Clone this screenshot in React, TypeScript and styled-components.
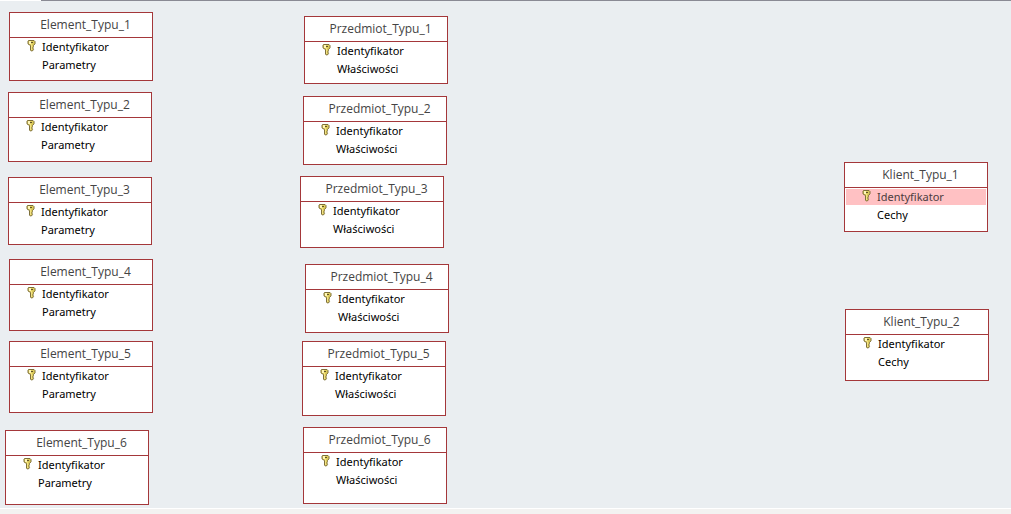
import React from "react";
import styled, { createGlobalStyle } from "styled-components";

const GlobalStyle = createGlobalStyle`
  body {
    margin: 0;
    font-family: "Noto Sans", "Open Sans", sans-serif;
  }
`;

const Page = styled.div`
  display: flex;
  flex-direction: column;
  min-height: 100vh;
  background: #f3f2f1;
`;

const TabEdge = styled.div`
  display: flex;
  height: 1px;
  background: #8a8a94;
`;

const ActiveTab = styled.div`
  width: 41px;
  background: #ffffff;
`;

const Canvas = styled.main`
  position: relative;
  flex: 1;
  background: #eaeef1;
  border-bottom: 1px solid #ffffff;
`;

const StatusStrip = styled.footer`
  height: 5px;
`;

const Entity = styled.section<{ $x: number; $y: number; $height: number }>`
  position: absolute;
  left: ${(p) => p.$x}px;
  top: ${(p) => p.$y}px;
  box-sizing: border-box;
  width: 144px;
  height: ${(p) => p.$height}px;
  border: 1px solid #a4373a;
  background: #ffffff;
`;

const EntityTitle = styled.h2`
  margin: 0;
  padding-left: 9px;
  height: 24px;
  border-bottom: 1px solid #a4373a;
  color: #444444;
  font-family: "Open Sans", "Noto Sans", sans-serif;
  font-size: 12px;
  font-weight: 400;
  line-height: 24px;
  text-align: center;
`;

const FieldList = styled.ul`
  display: flex;
  flex-direction: column;
  gap: 2px;
  margin: 0;
  padding: 1px;
  list-style: none;
`;

const Field = styled.li<{ $selected: boolean }>`
  display: flex;
  height: 16px;
  background: ${(p) => (p.$selected ? "#ffc1c3" : "transparent")};
  color: ${(p) => (p.$selected ? "#4c3c3e" : "#000000")};
  font-size: 11px;
  line-height: 16px;
`;

const KeySlot = styled.span`
  flex: none;
  width: 31px;
  padding: 1px 0 0 16px;
  box-sizing: border-box;
`;

const KeySvg = styled.svg`
  display: block;
`;

function KeyIcon() {
  return (
    <KeySvg width="9" height="12" viewBox="0 0 9 12" role="img" aria-label="Klucz podstawowy">
      <path
        d="M1.5.5h5.500l1 1v2.300L6.500 5.500v1l-.7.7.7.8-.7.9.7.8-1.200 1.300H4.300l-.8-1V5.500L1 3.900V1z"
        fill="#dccb5c"
        stroke="#7d6f3a"
        strokeWidth="1"
      />
      <path d="M2 1h2v3H2z" fill="#fff7b8" />
      <path d="M4 2h2v1H4z" fill="#5f5228" />
      <path d="M4.500 4v6" stroke="#f3e283" strokeWidth="1" />
    </KeySvg>
  );
}

type EntityData = {
  name: string;
  attribute: string;
  x: number;
  y: number;
  height: number;
  selected?: boolean;
};

const entities: EntityData[] = [
  { name: "Element_Typu_1", attribute: "Parametry", x: 9, y: 11, height: 69 },
  { name: "Element_Typu_2", attribute: "Parametry", x: 8, y: 91, height: 70 },
  { name: "Element_Typu_3", attribute: "Parametry", x: 8, y: 176, height: 68 },
  { name: "Element_Typu_4", attribute: "Parametry", x: 9, y: 258, height: 72 },
  { name: "Element_Typu_5", attribute: "Parametry", x: 9, y: 340, height: 72 },
  { name: "Element_Typu_6", attribute: "Parametry", x: 5, y: 429, height: 75 },
  { name: "Przedmiot_Typu_1", attribute: "Właściwości", x: 304, y: 15, height: 68 },
  { name: "Przedmiot_Typu_2", attribute: "Właściwości", x: 303, y: 95, height: 69 },
  { name: "Przedmiot_Typu_3", attribute: "Właściwości", x: 300, y: 175, height: 72 },
  { name: "Przedmiot_Typu_4", attribute: "Właściwości", x: 305, y: 263, height: 69 },
  { name: "Przedmiot_Typu_5", attribute: "Właściwości", x: 302, y: 340, height: 75 },
  { name: "Przedmiot_Typu_6", attribute: "Właściwości", x: 303, y: 426, height: 77 },
  { name: "Klient_Typu_1", attribute: "Cechy", x: 844, y: 161, height: 70, selected: true },
  { name: "Klient_Typu_2", attribute: "Cechy", x: 845, y: 308, height: 72 },
];

function EntityBox({ name, attribute, x, y, height, selected = false }: EntityData) {
  return (
    <Entity $x={x} $y={y} $height={height}>
      <EntityTitle>{name}</EntityTitle>
      <FieldList>
        <Field $selected={selected}>
          <KeySlot>
            <KeyIcon />
          </KeySlot>
          Identyfikator
        </Field>
        <Field $selected={false}>
          <KeySlot />
          {attribute}
        </Field>
      </FieldList>
    </Entity>
  );
}

export default function App() {
  return (
    <Page>
      <GlobalStyle />
      <TabEdge>
        <ActiveTab />
      </TabEdge>
      <Canvas>
        {entities.map((entity) => (
          <EntityBox key={entity.name} {...entity} />
        ))}
      </Canvas>
      <StatusStrip />
    </Page>
  );
}
